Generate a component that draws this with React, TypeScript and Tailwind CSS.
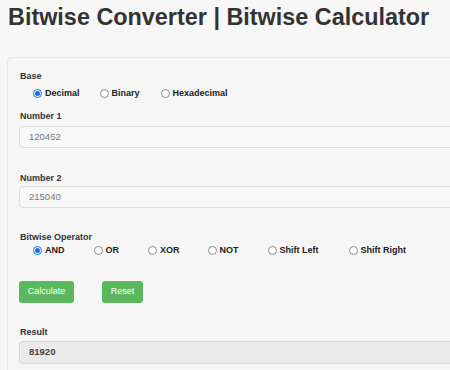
import React from "react";

function Radio({ label, checked, gap }: { label: string; checked?: boolean; gap: string }) {
  return (
    <label className={`flex items-center ${gap}`}>
      {checked ? (
        <span className="flex h-[9px] w-[9px] items-center justify-center rounded-full border border-[#1a6fe0] bg-white">
          <span className="h-[5px] w-[5px] rounded-full bg-[#1a6fe0]" />
        </span>
      ) : (
        <span className="h-[9px] w-[9px] rounded-full border border-[#8a8a8a] bg-white" />
      )}
      <span className="ml-[3px] text-[9px] font-bold leading-[12px] text-[#222]">{label}</span>
    </label>
  );
}

function FieldLabel({ children, className = "" }: { children: React.ReactNode; className?: string }) {
  return <div className={`ml-px text-[9px] font-bold leading-[12px] text-[#333] ${className}`}>{children}</div>;
}

export default function App() {
  return (
    <div className="h-[370px] w-[450px] overflow-hidden bg-[#f7f7f7] font-['Liberation_Sans',Arial,sans-serif]">
      <h1 className="px-2 pt-[3px] text-[23.4px] font-bold leading-[28px] text-[#333]">
        Bitwise Converter | Bitwise Calculator
      </h1>

      <div className="ml-[7px] mt-[26px] w-[480px] rounded-tl border border-[#e8e8e8] bg-[#f6f6f6] pl-[11px] pt-[12px] pb-6">
        <FieldLabel>Base</FieldLabel>
        <div className="ml-[14px] mt-[4px] flex h-[14px] items-center">
          <Radio label="Decimal" checked gap="mr-[20px]" />
          <Radio label="Binary" gap="mr-[21px]" />
          <Radio label="Hexadecimal" gap="mr-[20px]" />
        </div>

        <FieldLabel className="mt-[10px]">Number 1</FieldLabel>
        <div className="mt-[4px] flex h-[22px] items-center rounded border border-[#dcdcdc] bg-[#f8f8f8] pl-[9px] text-[9.5px] text-[#777]">
          120452
        </div>

        <FieldLabel className="mt-[24px]">Number 2</FieldLabel>
        <div className="mt-[2px] flex h-[22px] items-center rounded border border-[#dcdcdc] bg-[#f8f8f8] pl-[9px] text-[9.5px] text-[#777]">
          215040
        </div>

        <FieldLabel className="mt-[23px]">Bitwise Operator</FieldLabel>
        <div className="ml-[14px] mt-0 flex h-[14px] items-center">
          <Radio label="AND" checked gap="mr-[29px]" />
          <Radio label="OR" gap="mr-[29px]" />
          <Radio label="XOR" gap="mr-[28px]" />
          <Radio label="NOT" gap="mr-[29px]" />
          <Radio label="Shift Left" gap="mr-[30px]" />
          <Radio label="Shift Right" gap="mr-[27px]" />
        </div>

        <div className="mt-[24px] flex gap-[28px]">
          <button className="h-[22px] w-[55px] rounded-[3px] bg-[#5cb85c] text-[9px] text-white">Calculate</button>
          <button className="h-[22px] w-[41px] rounded-[3px] bg-[#5cb85c] text-[9px] text-white">Reset</button>
        </div>

        <FieldLabel className="mt-[23px]">Result</FieldLabel>
        <div className="mt-[3px] flex h-[23px] items-center rounded border border-[#d8d8d8] bg-[#ebebeb] pl-[9px] text-[9.5px] font-bold text-[#444]">
          81920
        </div>
      </div>
    </div>
  );
}
